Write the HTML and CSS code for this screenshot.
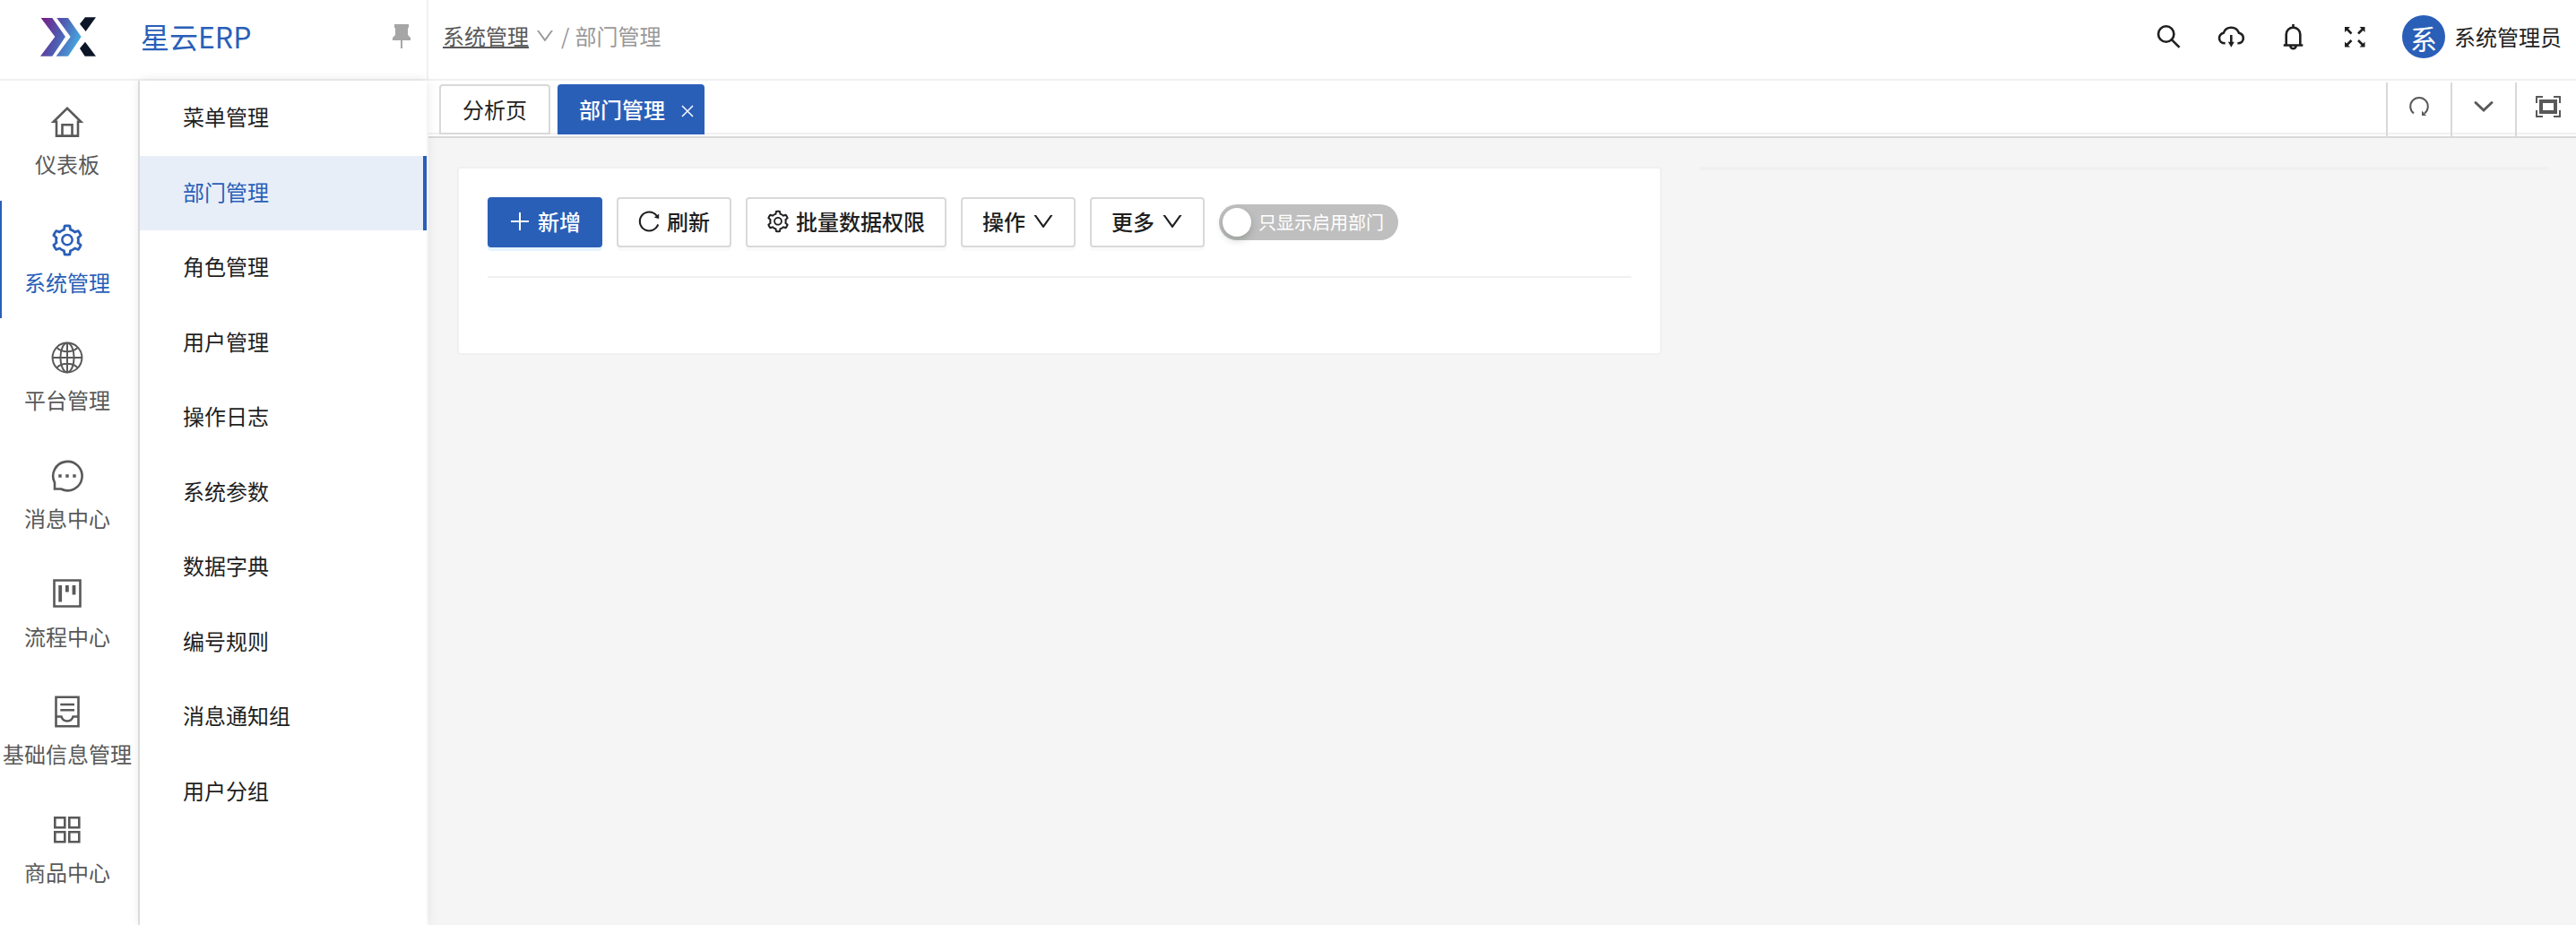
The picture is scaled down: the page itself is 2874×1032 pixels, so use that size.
FILE: index.html
```html
<!DOCTYPE html>
<html lang="zh-CN">
<head>
    <meta charset="UTF-8">
    <meta name="viewport" content="width=device-width, initial-scale=1.0">
    <title>星云ERP</title>
    <link rel="stylesheet" href="styles.css">
</head>
<body>
    <svg class="sprite" aria-hidden="true">
        <symbol id="icon-setting" viewBox="0 0 1024 1024">
            <path d="M924.8 625.7l-65.5-56c3.1-19 4.7-38.4 4.7-57.8s-1.6-38.8-4.7-57.8l65.5-56a32.03 32.03 0 009.3-35.2l-.9-2.6a443.74 443.74 0 00-79.7-137.9l-1.8-2.1a32.12 32.12 0 00-35.1-9.5l-81.3 28.9c-30-24.6-63.5-44-99.7-57.6l-15.7-85a32.05 32.05 0 00-25.8-25.7l-2.7-.5c-52.1-9.4-106.9-9.4-159 0l-2.7.5a32.05 32.05 0 00-25.8 25.7l-15.8 85.4a351.86 351.86 0 00-99 57.4l-81.9-29.1a32 32 0 00-35.1 9.5l-1.8 2.1a446.02 446.02 0 00-79.7 137.9l-.9 2.6c-4.5 12.5-.8 26.5 9.3 35.2l66.3 56.6c-3.1 18.8-4.6 38-4.6 57.1 0 19.2 1.5 38.4 4.6 57.1L99 625.5a32.03 32.03 0 00-9.3 35.2l.9 2.6c18.1 50.4 44.9 96.9 79.7 137.9l1.8 2.1a32.12 32.12 0 0035.1 9.5l81.9-29.1c29.8 24.5 63.1 43.9 99 57.4l15.8 85.4a32.05 32.05 0 0025.8 25.7l2.7.5a449.4 449.4 0 00159 0l2.7-.5a32.05 32.05 0 0025.8-25.7l15.7-85a350 350 0 0099.7-57.6l81.3 28.9a32 32 0 0035.1-9.5l1.8-2.1c34.8-41.1 61.6-87.5 79.7-137.9l.9-2.6c4.5-12.3.8-26.3-9.3-35zM788.3 465.9c2.5 15.1 3.8 30.6 3.8 46.1s-1.3 31-3.8 46.1l-6.6 40.1 74.7 63.9a370.03 370.03 0 01-42.6 73.6L721 702.8l-31.4 25.8c-23.9 19.6-50.5 35-79.3 45.8l-38.1 14.3-17.9 97a377.5 377.5 0 01-85 0l-17.9-97.2-37.8-14.5c-28.5-10.8-55-26.2-78.7-45.7l-31.4-25.9-93.4 33.2c-17-22.9-31.2-47.6-42.6-73.6l75.5-64.5-6.5-40c-2.4-14.9-3.7-30.3-3.7-45.5 0-15.3 1.2-30.6 3.7-45.5l6.5-40-75.5-64.5c11.3-26.1 25.6-50.7 42.6-73.6l93.4 33.2 31.4-25.9c23.7-19.5 50.2-34.9 78.7-45.7l37.9-14.3 17.9-97.2c28.1-3.2 56.8-3.2 85 0l17.9 97 38.1 14.3c28.7 10.8 55.4 26.2 79.3 45.8l31.4 25.8 92.8-32.9c17 22.9 31.2 47.6 42.6 73.6L781.8 426l6.5 39.9zM512 326c-97.2 0-176 78.8-176 176s78.8 176 176 176 176-78.8 176-176-78.8-176-176-176zm79.2 255.2A111.6 111.6 0 01512 614c-29.9 0-58-11.7-79.2-32.8A111.6 111.6 0 01400 502c0-29.9 11.7-58 32.8-79.2C454 401.6 482.1 390 512 390c29.9 0 58 11.6 79.2 32.8A111.6 111.6 0 01624 502c0 29.9-11.7 58-32.8 79.2z"/>
        </symbol>
        <symbol id="icon-down" viewBox="0 0 1024 1024">
            <path d="M884 256h-75c-5.1 0-9.9 2.5-12.9 6.6L512 654.2 227.9 262.6c-3-4.1-7.8-6.6-12.9-6.6h-75c-6.5 0-10.3 7.4-6.5 12.7l352.6 486.1c12.8 17.6 39 17.6 51.7 0l352.6-486.1c3.9-5.3.1-12.7-6.4-12.7z"/>
        </symbol>
    </svg>

    <header class="header">
        <div class="brand">
            <svg class="logo" viewBox="135 57 186 132">
                <defs>
                    <linearGradient id="logo-fill" gradientUnits="userSpaceOnUse" x1="135" y1="80" x2="272" y2="130">
                        <stop offset="0" stop-color="#751f86"/>
                        <stop offset="0.5" stop-color="#4e5db3"/>
                        <stop offset="1" stop-color="#46ace2"/>
                    </linearGradient>
                </defs>
                <path fill="url(#logo-fill)" d="M137 60h38l44 63-44 65h-40l49-65zM190 60h38l44 63-44 65h-40l48-65z"/>
                <path fill="#0c1626" d="M285 58h36l-34 47-20-25zM285 140l36 48h-37l-17-26z"/>
            </svg>
            <span class="brand-name">星云ERP</span>
            <button type="button" class="icon-btn pin" aria-label="固定菜单">
                <svg viewBox="0 0 28 28"><path d="M6 0h16v4h-1v8l3 3v3h-9v9h-2v-9H4v-3l3-3V4H6z"/></svg>
            </button>
        </div>
        <nav class="breadcrumb">
            <a href="#" class="crumb-link">系统管理</a>
            <svg class="crumb-arrow"><use href="#icon-down"/></svg>
            <span>/</span>
            <span>部门管理</span>
        </nav>
        <div class="header-tools">
            <button type="button" class="icon-btn" aria-label="搜索">
                <svg class="line-icon" viewBox="0 0 32 32"><circle cx="12.7" cy="13" r="8.7"/><path d="M19 19.3l8.6 8.6"/></svg>
            </button>
            <button type="button" class="icon-btn" aria-label="下载">
                <svg class="line-icon" viewBox="0 0 32 32">
                    <path d="M9.7 23.3C5.5 23.3 3 20.8 3 17.8c0-3 2-5.2 4.7-6C9 8 12 5.7 16.3 5.7s7.3 2.3 8.700 6.100c3 .8 4.800 3 4.800 6 0 3-2.300 5.500-6.400 5.500M16.300 14v9"/>
                    <path class="solid" d="M12.8 21.8h7l-3.500 6z"/>
                </svg>
            </button>
            <button type="button" class="icon-btn" aria-label="通知">
                <svg class="line-icon" viewBox="0 0 32 32"><path d="M8.7 25.5V13.6a7.8 8 0 0 1 15.6 0v11.9M5.7 25.5h21.6M16.5 2v3.5M13.3 26a3.2 3.2 0 0 0 6.4 0"/></svg>
            </button>
            <button type="button" class="icon-btn" aria-label="全屏">
                <svg class="line-icon" viewBox="0 0 32 32">
                    <path d="M7.5 7.5l5 5M25 7.5l-5 5M7.5 25l5-5M25 25l-5-5"/>
                    <path class="solid" d="M5 5h6l-6 6zM27.5 5h-6l6 6zM5 27.5h6l-6-6zM27.5 27.5h-6l6-6z"/>
                </svg>
            </button>
            <div class="user">
                <span class="avatar">系</span>
                <span>系统管理员</span>
            </div>
        </div>
    </header>

    <div class="layout">
        <nav class="rail">
            <a href="#" class="rail-item">
                <svg class="line-icon" viewBox="0 0 40 40"><path d="M8 35.6V19.8H4.8L20 4.8l15.2 15H32v15.8zM14.5 35V23.2h11V35"/></svg>
                <span>仪表板</span>
            </a>
            <a href="#" class="rail-item active">
                <svg><use href="#icon-setting"/></svg>
                <span>系统管理</span>
            </a>
            <a href="#" class="rail-item">
                <svg class="line-icon thin" viewBox="0 0 40 40">
                    <circle cx="20" cy="20" r="16.4"/>
                    <ellipse cx="20" cy="20" rx="7.6" ry="16.2"/>
                    <path d="M20 4v32M4 20h32M8.5 9c6 5.6 17 5.6 23 0M8.5 31c6-5.6 17-5.6 23 0"/>
                </svg>
                <span>平台管理</span>
            </a>
            <a href="#" class="rail-item">
                <svg class="line-icon" viewBox="0 0 40 40">
                    <path d="M6 34.500V27.500A16.200 16.200 0 1 1 13 34.500z"/>
                    <path class="solid" d="M10.3 18.3h3.4v3.4h-3.4zM18.3 18.3h3.4v3.4h-3.4zM26.3 18.3h3.4v3.4h-3.4z"/>
                </svg>
                <span>消息中心</span>
            </a>
            <a href="#" class="rail-item">
                <svg class="line-icon" viewBox="0 0 40 40">
                    <path d="M5.5 4.5h29v29h-29z"/>
                    <path class="solid" d="M10.3 10h3.8v18.5h-3.8zM18 10h3.8v7.5H18zM25.6 10h3.8v10.5h-3.8z"/>
                </svg>
                <span>流程中心</span>
            </a>
            <a href="#" class="rail-item">
                <svg class="line-icon" viewBox="0 0 40 40"><path d="M7.5 3.7h25v32.6h-25zM12.3 12h15.7M12.3 18.2h15.7M7.5 25.5h6c1 3.5 3.3 5 6.5 5s5.5-1.5 6.5-5h6"/></svg>
                <span>基础信息管理</span>
            </a>
            <a href="#" class="rail-item">
                <svg class="line-icon" viewBox="0 0 40 40"><path d="M6.3 6.3h11v11h-11zM22.3 6.3h11v11h-11zM6.3 22.3h11v11h-11zM22.3 22.3h11v11h-11z"/></svg>
                <span>商品中心</span>
            </a>
        </nav>

        <nav class="submenu">
            <a href="#" class="submenu-item">菜单管理</a>
            <a href="#" class="submenu-item active">部门管理</a>
            <a href="#" class="submenu-item">角色管理</a>
            <a href="#" class="submenu-item">用户管理</a>
            <a href="#" class="submenu-item">操作日志</a>
            <a href="#" class="submenu-item">系统参数</a>
            <a href="#" class="submenu-item">数据字典</a>
            <a href="#" class="submenu-item">编号规则</a>
            <a href="#" class="submenu-item">消息通知组</a>
            <a href="#" class="submenu-item">用户分组</a>
        </nav>

        <main class="main">
            <div class="tabs-bar">
                <div class="tabs">
                    <button type="button" class="tab">分析页</button>
                    <button type="button" class="tab active">
                        部门管理
                        <svg class="tab-close" viewBox="0 0 14 14"><path d="M1 1l12 12M13 1L1 13"/></svg>
                    </button>
                </div>
                <div class="tab-tools">
                    <button type="button" class="tab-tool" aria-label="刷新页面">
                        <svg class="line-icon thin" viewBox="0 0 32 32"><path d="M10 23.5a9.8 9.8 0 1 1 12 0"/><path class="solid" d="M19 20.500l5 5.500h-5z"/></svg>
                    </button>
                    <button type="button" class="tab-tool" aria-label="更多页签操作">
                        <svg class="line-icon bold" viewBox="0 0 32 32"><path d="M7 11.5l9 8.500 9-8.500"/></svg>
                    </button>
                    <button type="button" class="tab-tool" aria-label="内容全屏">
                        <svg class="line-icon thin" viewBox="0 0 32 32"><path d="M3 12V5h7M22 5h7v7M29 20v7h-7M10 27H3v-7"/><path class="frame" d="M8 10h16v12H8z"/></svg>
                    </button>
                </div>
            </div>

            <div class="content">
                <div class="col col-list">
                    <section class="card">
                        <div class="toolbar">
                            <button type="button" class="btn btn-primary">
                                <svg class="line-icon thin" viewBox="0 0 28 28"><path d="M14 4v20M4 14h20"/></svg>
                                新增
                            </button>
                            <button type="button" class="btn">
                                <svg viewBox="0 0 1024 1024"><path d="M909.1 209.3l-56.4 44.1C775.8 155.1 656.2 92 521.9 92 290 92 102.3 279.5 102 511.5 101.7 743.7 289.8 932 521.9 932c181.3 0 335.8-115 394.6-276.1 1.5-4.2-.7-8.9-4.9-10.3l-56.7-19.5a8 8 0 00-10.1 4.8c-1.8 5-3.8 10-5.9 14.9-17.3 41-42.1 77.8-73.7 109.4A344.77 344.77 0 01655.9 829c-42.3 17.9-87.4 27-133.8 27-46.5 0-91.5-9.1-133.8-27A341.5 341.5 0 01279 755.2a342.16 342.16 0 01-73.7-109.4c-17.9-42.4-27-87.4-27-133.9s9.1-91.5 27-133.9c17.3-41 42.1-77.8 73.7-109.4 31.6-31.6 68.4-56.4 109.3-73.8 42.3-17.9 87.4-27 133.8-27 46.5 0 91.5 9.1 133.8 27a341.5 341.5 0 01109.3 73.8c9.9 9.9 19.2 20.4 27.8 31.4l-60.2 47a8 8 0 003 14.1l175.6 43c5 1.2 9.9-2.6 9.9-7.7l.8-180.9c-.1-6.6-7.8-10.3-13-6.2z"/></svg>
                                刷新
                            </button>
                            <button type="button" class="btn">
                                <svg><use href="#icon-setting"/></svg>
                                批量数据权限
                            </button>
                            <button type="button" class="btn">
                                操作
                                <svg><use href="#icon-down"/></svg>
                            </button>
                            <button type="button" class="btn">
                                更多
                                <svg><use href="#icon-down"/></svg>
                            </button>
                            <label class="switch">
                                <input type="checkbox" role="switch">
                                只显示启用部门
                            </label>
                        </div>
                        <div class="tree"></div>
                    </section>
                </div>
                <div class="col col-detail">
                    <section class="card"></section>
                </div>
            </div>
        </main>
    </div>
</body>
</html>
```
FILE: styles.css
```css
* {
    margin: 0;
    padding: 0;
    box-sizing: border-box;
}

body {
    display: flex;
    flex-direction: column;
    min-height: 100vh;
    font-family: "Noto Sans CJK SC", sans-serif;
    font-size: 24px;
    line-height: 36px;
    color: #1f1f1f;
    background-color: #fff;
}

a {
    color: inherit;
    text-decoration: none;
}

button {
    font: inherit;
    color: inherit;
    background: none;
    border: none;
    cursor: pointer;
}

svg {
    display: block;
    flex-shrink: 0;
    fill: currentColor;
}

.sprite {
    position: absolute;
    width: 0;
    height: 0;
}

.line-icon {
    fill: none;
    stroke: currentColor;
    stroke-width: 2.6;
}

.line-icon.thin {
    stroke-width: 2;
}

.line-icon.bold {
    stroke-width: 3;
    stroke-linecap: round;
}

.line-icon .solid {
    fill: currentColor;
    stroke: none;
}

.line-icon .frame {
    stroke-width: 4;
}

/* header */
.header {
    display: flex;
    height: 90px;
    border-bottom: 2px solid #f0f0f0;
}

.brand {
    display: flex;
    align-items: center;
    width: 478px;
    padding: 0 14px 6px 45px;
    border-right: 2px solid #f0f0f0;
}

.logo {
    width: 62px;
    height: 44px;
}

.brand-name {
    margin-left: 50px;
    padding-bottom: 2px;
    font-size: 32px;
    color: #2a5fb8;
}

.icon-btn svg {
    width: 32px;
    height: 32px;
}

.pin {
    margin-left: auto;
    color: #a6a6a6;
}

.pin svg {
    width: 28px;
    height: 28px;
}

.breadcrumb {
    display: flex;
    align-items: center;
    gap: 6px;
    padding: 0 0 8px 16px;
    color: #999;
}

.crumb-link {
    color: #595959;
    text-decoration: underline;
    text-decoration-thickness: 2px;
    text-decoration-skip-ink: none;
    text-underline-offset: 2px;
}

.crumb-arrow {
    width: 24px;
    height: 24px;
}

.header-tools {
    display: flex;
    align-items: center;
    gap: 37px;
    margin-left: auto;
    padding: 0 16px 6px 0;
}

.user {
    display: flex;
    align-items: center;
    gap: 10px;
}

.avatar {
    width: 48px;
    height: 48px;
    padding-top: 2px;
    border-radius: 50%;
    font-size: 30px;
    line-height: 46px;
    text-align: center;
    color: #fff;
    background-color: #2a5fb8;
}

/* side menus */
.layout {
    display: flex;
    flex: 1;
}

.rail {
    width: 156px;
    padding: 2px 4px 0 0;
    border-right: 2px solid #e4e4e4;
}

.rail-item {
    display: flex;
    flex-direction: column;
    align-items: center;
    gap: 9px;
    height: 132px;
    padding-top: 24px;
    color: #595959;
    white-space: nowrap;
}

.rail-item:nth-child(3n+2) {
    height: 131px;
}

.rail-item svg {
    width: 40px;
    height: 40px;
}

.rail-item.active {
    color: #2a5fb8;
    box-shadow: inset 2px 0 0 #2a5fb8;
}

.submenu {
    position: relative;
    width: 320px;
    background-color: #fff;
    box-shadow: 0 0 12px rgba(0, 0, 0, 0.1);
}

.submenu-item {
    display: flex;
    align-items: center;
    height: 84px;
    padding: 0 0 4px 48px;
}

.submenu-item:nth-child(even) {
    height: 83px;
}

.submenu-item.active {
    color: #2a5fb8;
    background-color: #e8eef8;
    border-right: 4px solid #2a5fb8;
}

/* page tabs */
.main {
    flex: 1;
    min-width: 0;
    margin-left: 2px;
    background-color: #f5f5f5;
}

.tabs-bar {
    display: flex;
    justify-content: space-between;
    height: 64px;
    padding: 2px 0 0 12px;
    border-bottom: 2px solid #d9d9d9;
    background: linear-gradient(#f0f0f0, #f0f0f0) 0 58px / 100% 2px no-repeat #fff;
}

.tabs {
    display: flex;
    align-items: flex-start;
    gap: 8px;
    padding-top: 2px;
}

.tab {
    display: flex;
    align-items: center;
    height: 56px;
    padding: 0 24px;
    border: 2px solid #d9d9d9;
    border-radius: 4px 4px 0 0;
    background-color: #fff;
}

.tab.active {
    gap: 18px;
    padding: 0 10px 0 22px;
    border-color: #2a5fb8;
    font-weight: 500;
    color: #fff;
    background-color: #2a5fb8;
}

.tab-close {
    width: 14px;
    height: 14px;
    margin-top: 4px;
    stroke: currentColor;
    stroke-width: 1.5;
}

.tab-tools {
    display: flex;
}

.tab-tool {
    display: flex;
    justify-content: center;
    width: 72px;
    padding-top: 11px;
    border-left: 2px solid #d9d9d9;
    color: #595959;
}

.tab-tool:last-child {
    width: 68px;
    padding-left: 4px;
}

.tab-tool svg {
    width: 32px;
    height: 32px;
}

/* content */
.content {
    display: flex;
    align-items: flex-start;
    padding: 32px 10px;
}

.col {
    padding: 0 20px 0 22px;
}

.col-list {
    flex: 0 0 calc(100% * 14 / 24);
}

.col-detail {
    flex: 0 0 calc(100% * 10 / 24);
}

.card {
    border: 2px solid #f0f0f0;
    border-radius: 4px;
    background-color: #fff;
}

.toolbar {
    display: flex;
    align-items: center;
    gap: 16px;
    margin: 0 32px;
    padding: 32px 0;
    border-bottom: 2px solid #f0f0f0;
}

.btn {
    display: flex;
    align-items: center;
    gap: 8px;
    height: 56px;
    padding: 0 22px 2px;
    border: 2px solid #d9d9d9;
    border-radius: 4px;
    font-weight: 500;
    background-color: #fff;
    box-shadow: 0 4px 0 rgba(0, 0, 0, 0.02);
}

.btn svg {
    width: 28px;
    height: 28px;
    margin: 0 -2px;
}

.btn-primary {
    border-color: #2a5fb8;
    color: #fff;
    background-color: #2a5fb8;
    box-shadow: 0 4px 0 rgba(5, 145, 255, 0.1);
}

.switch {
    display: flex;
    align-items: center;
    gap: 8px;
    height: 40px;
    padding: 0 16px 0 4px;
    border-radius: 20px;
    font-size: 20px;
    color: #fff;
    background-color: #bfbfbf;
    cursor: pointer;
}

.switch input {
    appearance: none;
    width: 32px;
    height: 32px;
    border-radius: 50%;
    background-color: #fff;
    box-shadow: 0 4px 8px rgba(0, 35, 11, 0.2);
}

.tree {
    height: 84px;
}
```
